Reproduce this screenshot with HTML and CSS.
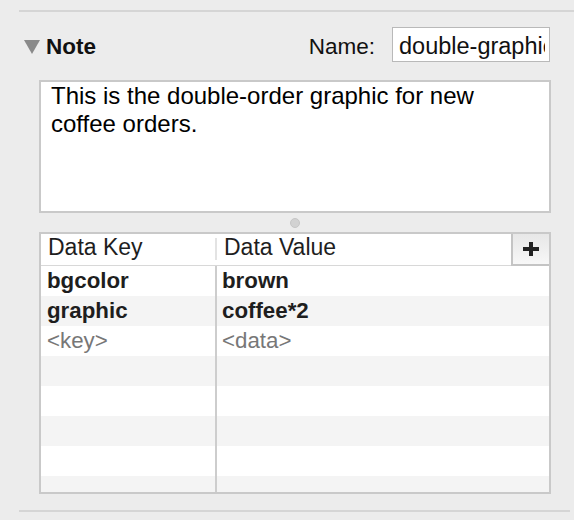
FILE: index.html
```html
<!DOCTYPE html>
<html>
<head>
<meta charset="utf-8">
<link rel="stylesheet" href="styles.css">
</head>
<body>
<div class="panel">
  <div class="rule rule-top"></div>
  <div class="content">
    <div class="head">
      <div class="disclosure">
        <span class="tri"></span>
        <span class="title">Note</span>
      </div>
      <div class="name">
        <span class="name-label">Name:</span>
        <div class="name-field"><span class="name-text">double-graphic</span></div>
      </div>
    </div>
    <div class="note-text">This is the double-order graphic for new coffee orders.</div>
    <div class="splitter"><span class="knob"></span></div>
    <div class="table">
      <div class="thead">
        <div class="th th-key">Data Key</div>
        <span class="th-sep"></span>
        <div class="th th-val">Data Value</div>
        <div class="add">
          <svg width="16" height="14" viewBox="0 0 16 14"><rect x="0" y="5" width="16" height="4" fill="#222"/><rect x="6" y="0" width="4" height="14" fill="#222"/></svg>
        </div>
      </div>
      <div class="tbody">
        <div class="row"><div class="cell k strong">bgcolor</div><div class="cell v strong">brown</div></div>
        <div class="row alt"><div class="cell k strong">graphic</div><div class="cell v strong">coffee*2</div></div>
        <div class="row"><div class="cell k ph">&lt;key&gt;</div><div class="cell v ph">&lt;data&gt;</div></div>
        <div class="row alt"><div class="cell k"></div><div class="cell v"></div></div>
        <div class="row"><div class="cell k"></div><div class="cell v"></div></div>
        <div class="row alt"><div class="cell k"></div><div class="cell v"></div></div>
        <div class="row"><div class="cell k"></div><div class="cell v"></div></div>
        <div class="row alt"><div class="cell k"></div><div class="cell v"></div></div>
      </div>
    </div>
  </div>
  <div class="rule rule-bottom"></div>
</div>
</body>
</html>
```
FILE: styles.css
```css
html, body {
  margin: 0;
  padding: 0;
  background: #ececec;
  font-family: "Liberation Sans", Arial, sans-serif;
  color: #1e1e1e;
}
.panel {
  padding: 10px 0 0 19px;
}
.rule {
  height: 2px;
  background: #d5d5d5;
}
.rule-bottom {
  margin: 16px 4px 0 0;
}
.content {
  padding-right: 23px;
}
.head {
  display: flex;
  justify-content: space-between;
  align-items: flex-start;
  margin-top: 15px;
  height: 35px;
}
.disclosure {
  display: flex;
  align-items: flex-start;
}
.tri {
  width: 0;
  height: 0;
  margin: 13px 0 0 5px;
  border-left: 8px solid transparent;
  border-right: 8px solid transparent;
  border-top: 14px solid #8a8a8a;
}
.title {
  margin-left: 6px;
  padding-top: 7px;
  font-size: 22.5px;
  line-height: 25px;
  font-weight: bold;
  color: #111;
}
.name {
  display: flex;
  align-items: flex-start;
}
.name-label {
  padding-top: 7px;
  font-size: 22.5px;
  line-height: 25px;
  color: #111;
  margin-right: 17px;
}
.name-field {
  box-sizing: border-box;
  width: 158px;
  height: 35px;
  margin-right: 1px;
  background: #fff;
  border: 1px solid #b9b9b9;
  padding: 3px 4px 0 6px;
  font-size: 23.5px;
  line-height: 30px;
  color: #111;
}
.name-text {
  display: block;
  white-space: nowrap;
  overflow: hidden;
}
.note-text {
  box-sizing: border-box;
  margin: 18px 0 0 20px;
  height: 133px;
  background: #fff;
  border: 2px solid #c9c9c9;
  padding: 0 20px 0 10px;
  font-size: 24px;
  line-height: 28px;
  color: #000;
}
.splitter {
  margin-left: 20px;
  height: 19px;
  display: flex;
  align-items: center;
  justify-content: center;
}
.knob {
  box-sizing: border-box;
  width: 10px;
  height: 10px;
  border-radius: 50%;
  background: #d2d2d2;
  border: 1px solid #c6c6c6;
}
.table {
  box-sizing: border-box;
  margin-left: 20px;
  height: 262px;
  background: #fff;
  border: 2px solid #c9c9c9;
  overflow: hidden;
}
.thead {
  display: flex;
  align-items: flex-start;
  height: 31px;
  border-bottom: 1px solid #d8d8d8;
}
.th {
  font-size: 23px;
  line-height: 25px;
  padding-top: 1px;
  color: #1e1e1e;
  padding-left: 7px;
}
.th-key {
  box-sizing: border-box;
  width: 174px;
}
.th-sep {
  width: 2px;
  height: 22px;
  margin-top: 4px;
  background: #e3e3e3;
}
.th-val {
  flex: 1;
}
.add {
  box-sizing: border-box;
  width: 38px;
  height: 32px;
  border-left: 2px solid #c4c4c4;
  border-bottom: 2px solid #c4c4c4;
  background: linear-gradient(#e7e7e7, #f7f7f7);
  display: flex;
  align-items: center;
  justify-content: center;
}
.add svg {
  display: block;
}
.row {
  display: flex;
  height: 30px;
  font-size: 22.3px;
  line-height: 30px;
}
.row.alt {
  background: #f4f4f4;
}
.cell.k {
  box-sizing: border-box;
  width: 176px;
  padding-left: 6px;
  border-right: 2px solid #cdcdcd;
}
.cell.v {
  flex: 1;
  padding-left: 5px;
}
.strong {
  font-weight: bold;
  color: #1e1e1e;
}
.ph {
  color: #777;
}
```
